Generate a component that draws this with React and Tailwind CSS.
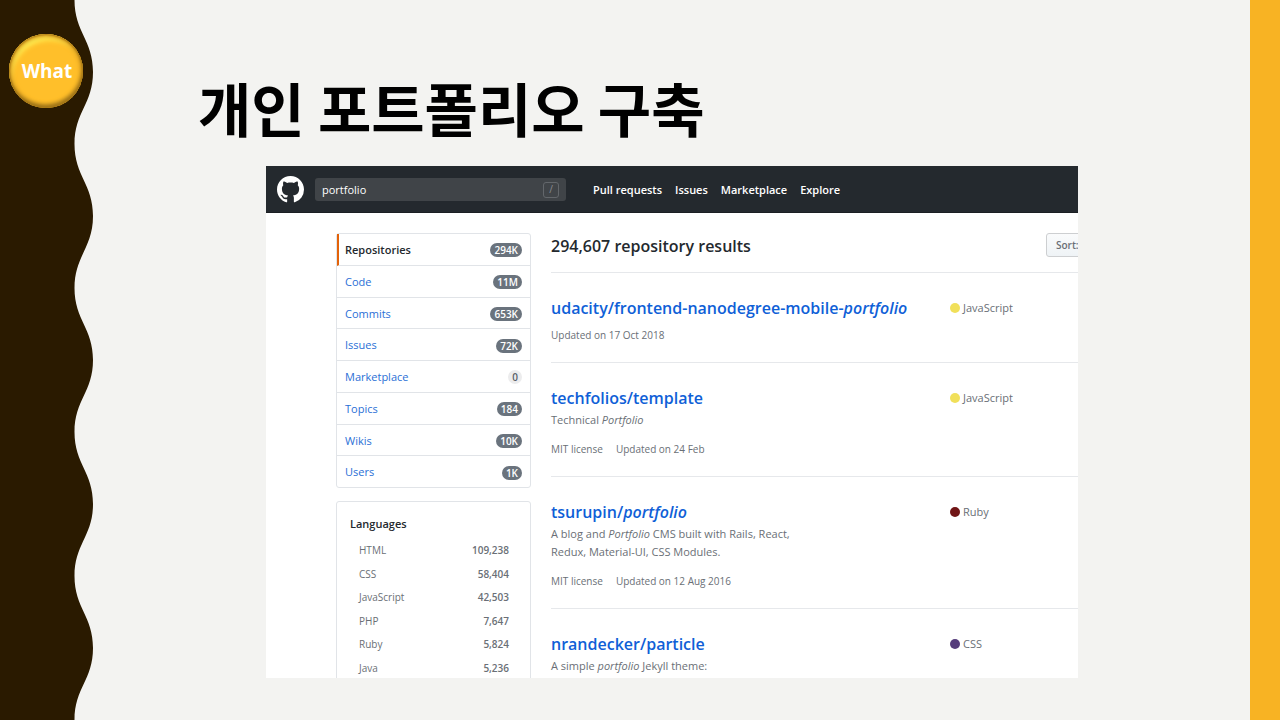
const menu = [
  { label: "Repositories", count: "294K", active: true },
  { label: "Code", count: "11M" },
  { label: "Commits", count: "653K" },
  { label: "Issues", count: "72K" },
  { label: "Marketplace", count: "0", empty: true },
  { label: "Topics", count: "184" },
  { label: "Wikis", count: "10K" },
  { label: "Users", count: "1K" },
];

const languages = [
  ["HTML", "109,238"],
  ["CSS", "58,404"],
  ["JavaScript", "42,503"],
  ["PHP", "7,647"],
  ["Ruby", "5,824"],
  ["Java", "5,236"],
];

const results = [
  {
    title: <>udacity/frontend-nanodegree-mobile-<em>portfolio</em></>,
    meta: ["Updated on 17 Oct 2018"],
    language: "JavaScript",
    dot: "bg-[#f1e05a]",
  },
  {
    title: <>techfolios/template</>,
    description: <>Technical <em>Portfolio</em></>,
    meta: ["MIT license", "Updated on 24 Feb"],
    language: "JavaScript",
    dot: "bg-[#f1e05a]",
  },
  {
    title: <>tsurupin/<em>portfolio</em></>,
    description: <>A blog and <em>Portfolio</em> CMS built with Rails, React, Redux, Material-UI, CSS Modules.</>,
    meta: ["MIT license", "Updated on 12 Aug 2016"],
    language: "Ruby",
    dot: "bg-[#701516]",
  },
  {
    title: <>nrandecker/particle</>,
    description: <>A simple <em>portfolio</em> Jekyll theme:</>,
    meta: [],
    language: "CSS",
    dot: "bg-[#563d7c]",
  },
];

function WaveRail() {
  return (
    <aside className="relative w-[93px] shrink-0">
      <svg className="absolute inset-0 h-full w-full" viewBox="0 0 93 720" preserveAspectRatio="none" aria-hidden="true">
        <path
          fill="#2a1a00"
          d="M0 0H74.5C74.5 32 93 40 93 72S74.5 112 74.5 144S93 184 93 216S74.5 256 74.5 288S93 328 93 360S74.5 400 74.5 432S93 472 93 504S74.5 544 74.5 576S93 616 93 648S74.5 688 74.5 720H0Z"
        />
      </svg>
      <div className="relative pl-[9px] pt-[34px]">
        <button className="flex size-[74px] items-center justify-center rounded-full bg-[#ffbf2a] pl-[2px] text-[19px] font-bold text-white shadow-[inset_0_0_2px_1px_#a87816,inset_-1px_-4px_4px_-1px_#96701a,inset_0_0_4px_3px_#e0a322,inset_4px_8px_5px_-2px_#fff558]">
          What
        </button>
      </div>
    </aside>
  );
}

function GitHubMark() {
  return (
    <svg className="block size-[27px]" viewBox="0 0 16 16" fill="currentColor" aria-hidden="true">
      <path
        fillRule="evenodd"
        d="M8 0C3.58 0 0 3.58 0 8c0 3.54 2.29 6.53 5.47 7.59.4.07.55-.17.55-.38 0-.19-.01-.82-.01-1.49-2.01.37-2.53-.49-2.69-.94-.09-.23-.48-.94-.82-1.13-.28-.15-.68-.52-.01-.53.63-.01 1.08.58 1.23.82.72 1.21 1.87.87 2.33.66.07-.52.28-.87.51-1.07-1.78-.2-3.64-.89-3.64-3.95 0-.87.31-1.59.82-2.15-.08-.2-.36-1.02.08-2.12 0 0 .67-.21 2.2.82.64-.18 1.32-.27 2-.27.68 0 1.36.09 2 .27 1.53-1.04 2.2-.82 2.2-.82.44 1.1.16 1.92.08 2.12.51.56.82 1.27.82 2.15 0 3.07-1.87 3.75-3.65 3.95.29.25.54.73.54 1.48 0 1.07-.01 1.93-.01 2.2 0 .21.15.46.55.38A8.013 8.013 0 0 0 16 8c0-4.42-3.58-8-8-8z"
      />
    </svg>
  );
}

function TopBar() {
  return (
    <header className="flex h-[47px] items-center border-b border-[#1b1f23] bg-[#24292e] pl-[11px] text-white">
      <a href="#home" aria-label="Homepage">
        <GitHubMark />
      </a>
      <div className="relative ml-[11px] w-[251px]">
        <input
          aria-label="Search"
          defaultValue="portfolio"
          className="block h-[23px] w-full rounded-[3px] bg-[#404448] pl-[7px] pr-7 text-[11px] text-white outline-none"
        />
        <kbd className="absolute right-[7px] top-1 flex size-4 items-center justify-center rounded-[3px] border border-[#63676b] font-['Open_Sans',sans-serif] text-[10px] text-[#8a8e92]">
          /
        </kbd>
      </div>
      <nav className="ml-[27px] flex gap-[13px] pt-[2px] text-[11px] font-semibold">
        <a href="#pulls">Pull requests</a>
        <a href="#issues">Issues</a>
        <a href="#marketplace">Marketplace</a>
        <a href="#explore">Explore</a>
      </nav>
    </header>
  );
}

function Sidebar() {
  return (
    <div className="w-[195px] shrink-0">
      <nav className="flex h-[255px] flex-col rounded-[3px] border border-[#e1e4e8] text-[11px]">
        {menu.map((item) => (
          <a
            key={item.label}
            href={"#" + item.label}
            className={
              "flex flex-1 items-center justify-between border-b border-[#e1e4e8] pr-2 pt-[2px] last:border-b-0 " +
              (item.active ? "border-l-2 border-l-[#e36209] pl-[6px] font-semibold text-[#24292e]" : "pl-2 text-[#2a6fd6]")
            }
          >
            {item.label}
            <span
              className={
                "rounded-full px-1 text-[10px] font-semibold leading-[14px] " +
                (item.empty ? "bg-[#ececed] text-[#586069]" : "bg-[#6a737d] text-white")
              }
            >
              {item.count}
            </span>
          </a>
        ))}
      </nav>
      <section className="mt-[13px] rounded-[3px] border border-[#e1e4e8] pb-4 pl-[13px] pr-[21px] pt-[13px]">
        <h3 className="text-[11px] font-semibold leading-[18px] text-[#24292e]">Languages</h3>
        <ul className="mt-[6px] grid h-[141px] auto-rows-fr pl-[9px] text-[10px] text-[#6a6f76]">
          {languages.map(([name, count]) => (
            <li key={name} className="flex items-center justify-between">
              <a href={"#" + name}>{name}</a>
              <span className="font-semibold">{count}</span>
            </li>
          ))}
        </ul>
      </section>
    </div>
  );
}

function Result({ item }) {
  return (
    <li className="flex border-b border-[#e6e8eb] pb-[18px] pt-[23px] text-[#6a6f76]">
      <div className="min-w-0 flex-1">
        <h3 className="whitespace-nowrap text-[16px] font-semibold leading-6 text-[#0f5fd7]">
          <a href="#repository">{item.title}</a>
        </h3>
        {item.description && <p className="mt-px w-[270px] text-[11px] leading-[18px]">{item.description}</p>}
        <div className={"flex gap-[13px] text-[10px] leading-[18px] " + (item.description ? "mt-[11px]" : "mt-[6px]")}>
          {item.meta.map((text) => (
            <span key={text}>{text}</span>
          ))}
        </div>
      </div>
      <div className="flex h-6 w-[128px] items-center gap-[3px] text-[11px]">
        <span className={"size-[10px] rounded-full " + item.dot} />
        {item.language}
      </div>
    </li>
  );
}

export default function App() {
  return (
    <div className="flex min-h-screen overflow-hidden bg-[#f3f3f1] font-['Open_Sans','Noto_Sans_CJK_KR',sans-serif]">
      <WaveRail />
      <main className="min-w-0 flex-1 pb-[42px] pl-[105px] pr-[172px] pt-[67px]">
        <h1 className="font-['Noto_Sans_CJK_KR',sans-serif] text-[58px] font-bold leading-[80px] text-black">
          개인 포트폴리오 구축
        </h1>
        <div className="ml-[68px] mt-[19px] h-[512px] overflow-hidden bg-white">
          <TopBar />
          <div className="flex gap-5 pl-[70px] pt-5">
            <Sidebar />
            <section className="min-w-0 flex-1">
              <div className="flex h-[40px] items-start justify-between border-b border-[#e6e8eb]">
                <h2 className="text-[16px] font-semibold leading-[26px] text-[#24292e]">294,607 repository results</h2>
                <div className="flex w-8">
                  <button className="h-6 w-[110px] shrink-0 rounded-[3px] border border-[#cdcfd1] bg-linear-to-b from-[#fafbfc] to-[#eff3f6] pl-[9px] text-left text-[10px] font-semibold text-[#6a6f76]">
                    Sort:
                  </button>
                </div>
              </div>
              <ul>
                {results.map((item, i) => (
                  <Result key={i} item={item} />
                ))}
              </ul>
            </section>
          </div>
        </div>
      </main>
      <div className="w-[30px] shrink-0 bg-[#f8b323]" />
    </div>
  );
}
